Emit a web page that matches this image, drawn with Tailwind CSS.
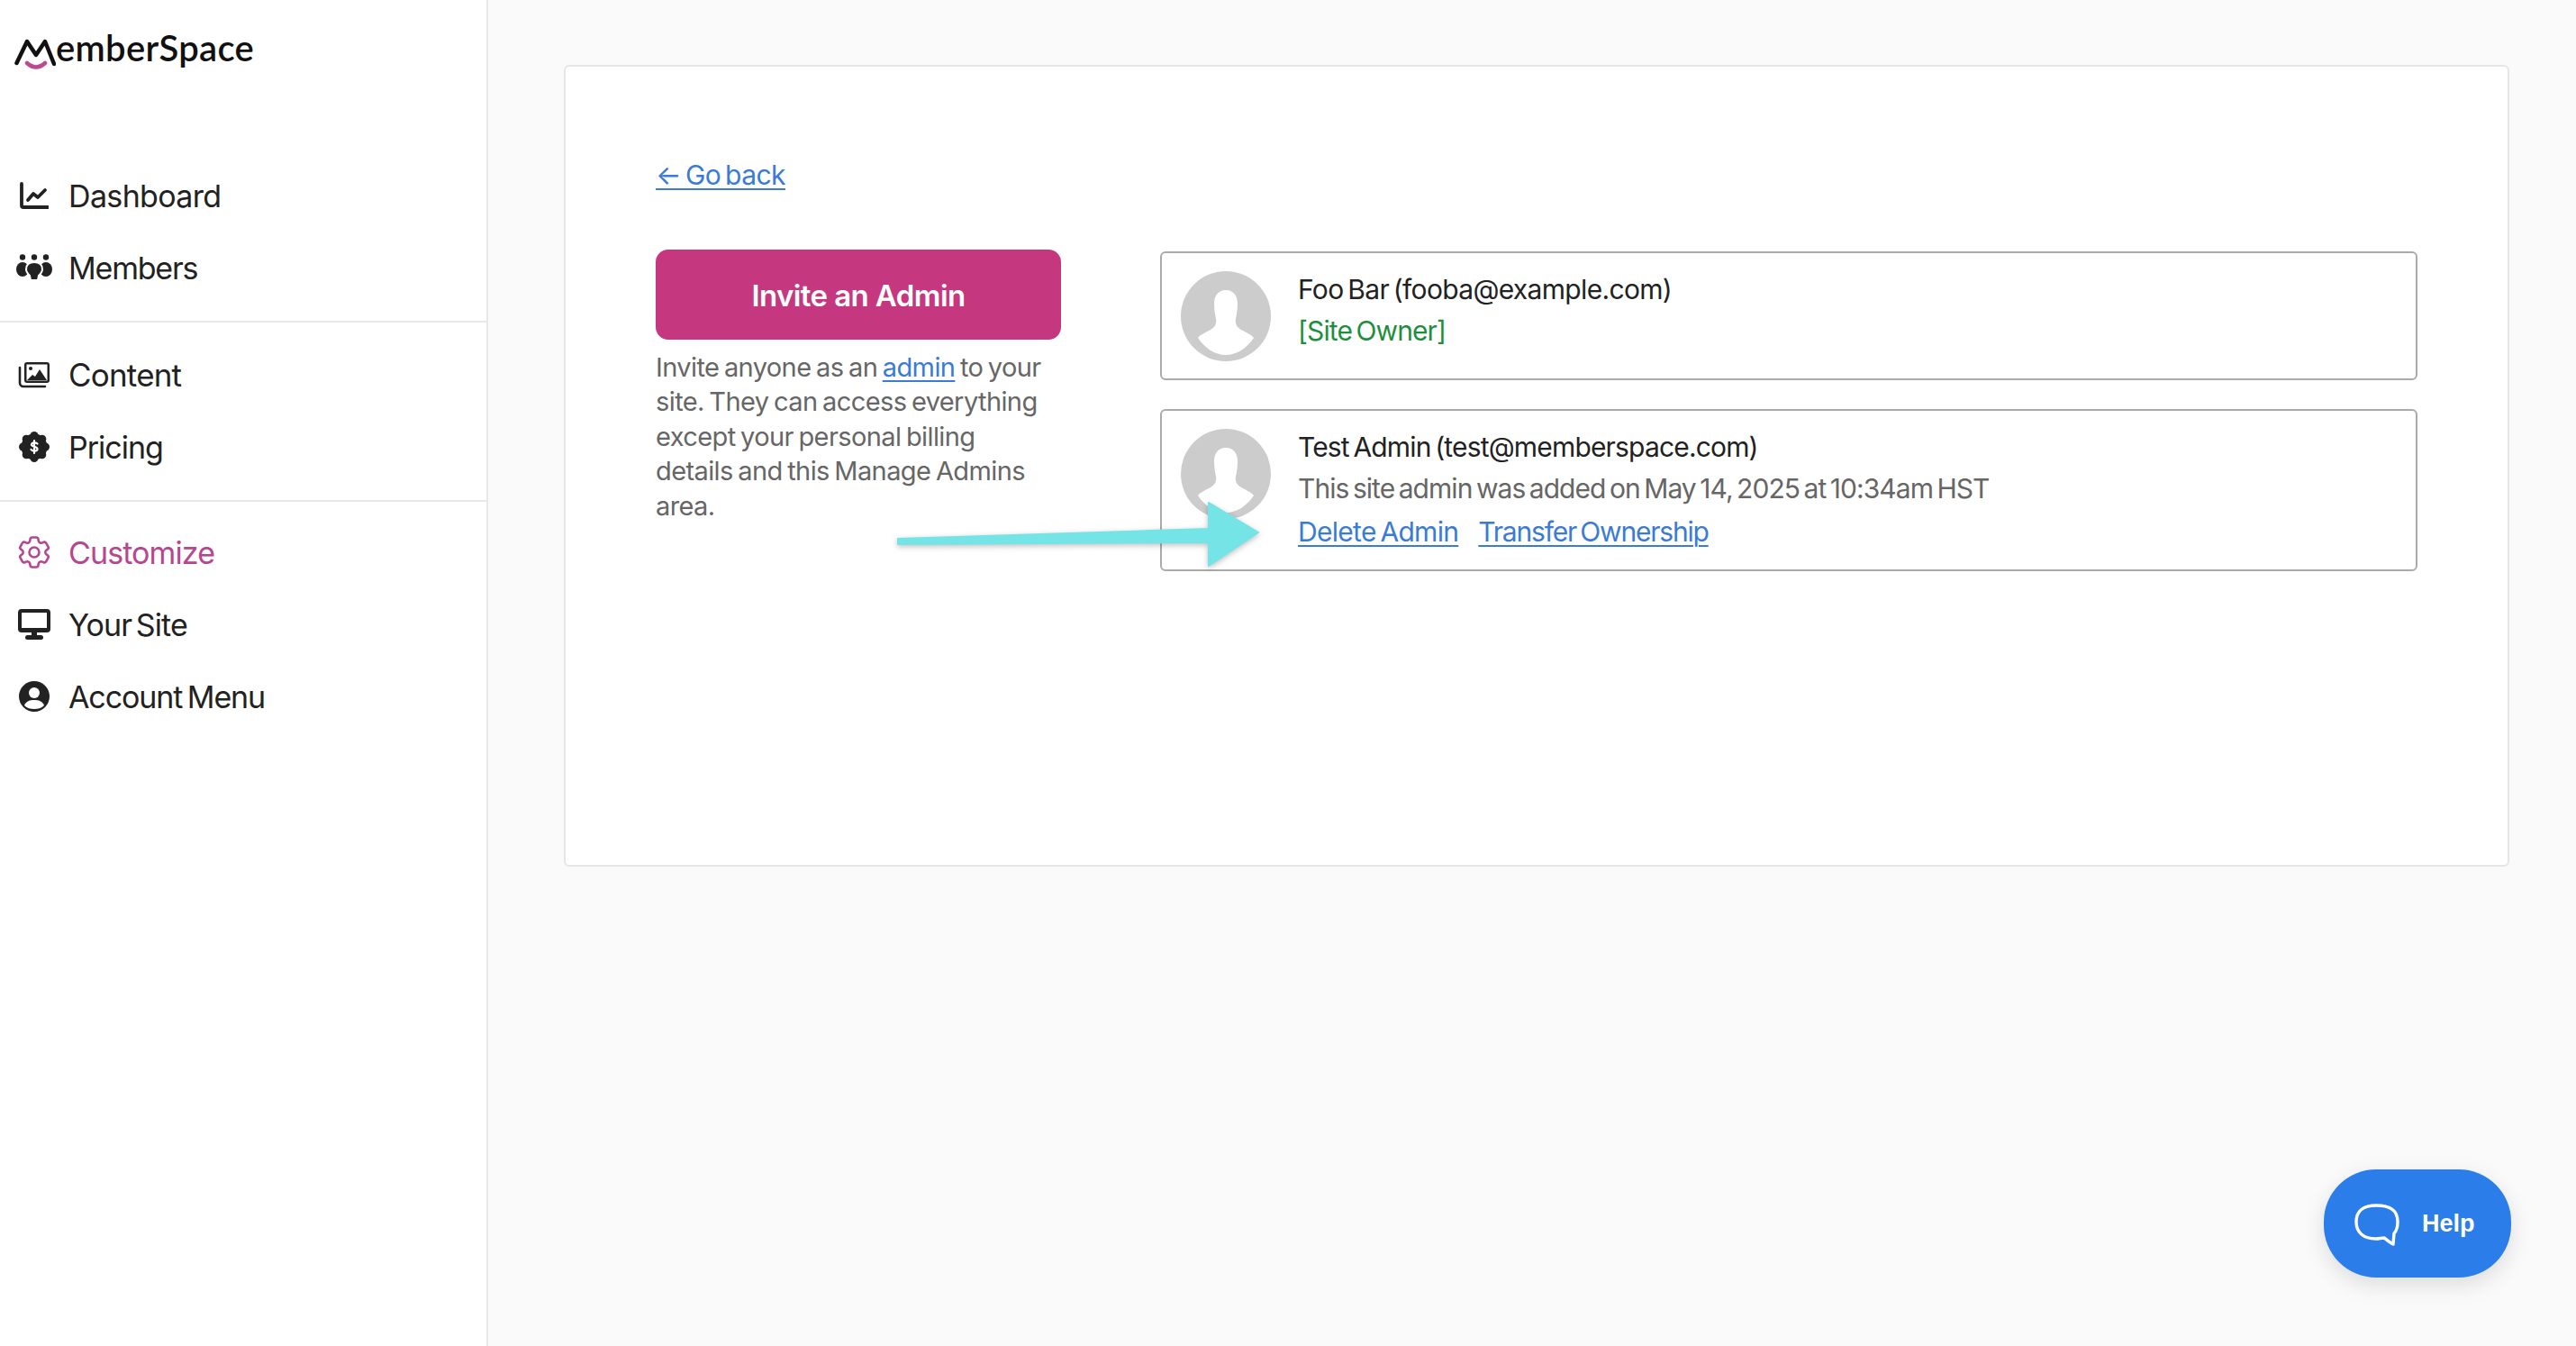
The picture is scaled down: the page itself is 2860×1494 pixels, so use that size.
<!DOCTYPE html>
<html lang="en">
<head>
    <meta charset="UTF-8">
    <title>Manage Admins</title>
    <script src="https://cdn.jsdelivr.net/npm/@tailwindcss/browser@4"></script>
</head>
<body class="bg-[#fafafa] font-['Inter',sans-serif] text-[#222]">
    <div class="relative flex h-[1494px] w-[2860px] overflow-hidden">
        <!-- Sidebar -->
        <aside class="h-full w-[542px] shrink-0 border-r-2 border-[#e8e8e8] bg-white">
            <div class="flex h-[177px] items-start pl-[16px] pt-[26px]">
                <svg class="mt-[17px] h-[36px] w-[46px] shrink-0" viewBox="0 0 46 36" fill="none">
                    <path d="M2.500 27 L14 3 L24 18 L34 3 L44 28" stroke="#111" stroke-width="4.500" stroke-linecap="round" stroke-linejoin="round"/>
                    <path d="M14 27 Q24 36 34 27" stroke="#bb4a93" stroke-width="4.500" stroke-linecap="round"/>
                </svg>
                <span class="text-[40px] leading-[54px] font-semibold tracking-[0.3px] text-[#111] font-['Lato',sans-serif]">emberSpace</span>
            </div>

            <nav>
                <a class="flex h-[80px] items-center" href="#">
                    <span class="flex w-[76px] justify-center">
                        <svg class="h-[30px] w-[32px]" viewBox="0 0 32 30" fill="none" stroke="#222" stroke-width="3.800" stroke-linecap="round" stroke-linejoin="round"><path d="M2 2V26a2 2 0 0 0 2 2H31"/><path d="M9 20l6-7 5 4 8-8"/></svg>
                    </span>
                    <span class="text-[34px] tracking-[-0.65px]">Dashboard</span>
                </a>
                <a class="flex h-[80px] items-center" href="#">
                    <span class="flex w-[76px] justify-center">
                        <svg class="h-[30px] w-[40px]" viewBox="0 0 40 30" fill="#222"><circle cx="7" cy="3.500" r="3.200"/><circle cx="20" cy="3.500" r="3.200"/><circle cx="33" cy="3.500" r="3.200"/><ellipse cx="7" cy="17" rx="7" ry="8"/><ellipse cx="33" cy="17" rx="7" ry="8"/><path d="M20 9c6 0 9 3 9 8 0 3-2 5-4 7l-1 5h-8l-1-5c-2-2-4-4-4-7 0-5 3-8 9-8z" stroke="#fff" stroke-width="2"/></svg>
                    </span>
                    <span class="text-[34px] tracking-[-1.2px]">Members</span>
                </a>
            </nav>
            <div class="mt-[19px] border-t-2 border-[#e8e8e8] pt-[18px]">
                <a class="flex h-[80px] items-center" href="#">
                    <span class="flex w-[76px] justify-center">
                        <svg class="h-[30px] w-[36px]" viewBox="0 0 36 30" fill="none"><path d="M2 7V24a4 4 0 0 0 4 4H30" stroke="#222" stroke-width="2.600" stroke-linecap="round"/><rect x="7" y="1" width="28" height="23" rx="3" fill="#222"/><rect x="9.500" y="3.500" width="23" height="18" fill="#fff"/><circle cx="14" cy="8" r="2" fill="#222"/><path d="M10 21l6-6 3 2 5-8 8 12z" fill="#222"/></svg>
                    </span>
                    <span class="text-[35px] tracking-[-0.8px]">Content</span>
                </a>
                <a class="flex h-[80px] items-center" href="#">
                    <span class="flex w-[76px] justify-center">
                        <svg class="h-[34px] w-[34px]" viewBox="0 0 34 34"><g fill="#222"><circle cx="17" cy="17" r="14.500"/><circle cx="17" cy="4.500" r="4.500"/><circle cx="17" cy="29.500" r="4.500"/><circle cx="4.500" cy="17" r="4.500"/><circle cx="29.500" cy="17" r="4.500"/><circle cx="8.200" cy="8.200" r="4.500"/><circle cx="25.800" cy="8.200" r="4.500"/><circle cx="8.200" cy="25.800" r="4.500"/><circle cx="25.800" cy="25.800" r="4.500"/></g><path fill="none" stroke="#fff" stroke-width="2.200" stroke-linecap="round" d="M20.500 13.500c-.8-1.500-6-2-6.500 .8-.5 3 7 2.200 6.500 5.400-.5 2.600-5.800 2.300-7 .3M17 10v14"/></svg>
                    </span>
                    <span class="text-[34px] tracking-[-1px]">Pricing</span>
                </a>
            </div>
            <div class="mt-[19px] border-t-2 border-[#e8e8e8] pt-[16px]">
                <a class="flex h-[80px] items-center text-[#b8468f]" href="#">
                    <span class="flex w-[76px] justify-center">
                        <svg class="h-[44px] w-[44px]" viewBox="0 0 24 24" fill="none" stroke="#b8468f" stroke-width="1.400" stroke-linejoin="round"><path d="M9.594 3.940c.09-.542.56-.94 1.110-.94h2.593c.55 0 1.020.398 1.110.94l.213 1.281c.063.374.313.686.645.87.074.04.147.083.22.127.325.196.72.257 1.075.124l1.217-.456a1.125 1.125 0 0 1 1.370.49l1.296 2.247a1.125 1.125 0 0 1-.26 1.431l-1.003.827c-.293.241-.438.613-.43.992a7.723 7.723 0 0 1 0 .255c-.008.378.137.75.43.991l1.004.827c.424.35.534.955.26 1.430l-1.298 2.247a1.125 1.125 0 0 1-1.369.491l-1.217-.456c-.355-.133-.75-.072-1.076.124a6.470 6.470 0 0 1-.22.128c-.331.183-.581.495-.644.869l-.213 1.281c-.09.543-.56.94-1.110.94h-2.594c-.55 0-1.019-.398-1.110-.94l-.213-1.281c-.062-.374-.312-.686-.644-.87a6.520 6.520 0 0 1-.22-.127c-.325-.196-.72-.257-1.076-.124l-1.217.456a1.125 1.125 0 0 1-1.369-.49l-1.297-2.247a1.125 1.125 0 0 1 .26-1.431l1.004-.827c.292-.24.437-.613.43-.991a6.932 6.932 0 0 1 0-.255c.007-.38-.138-.751-.43-.992l-1.004-.827a1.125 1.125 0 0 1-.26-1.430l1.297-2.247a1.125 1.125 0 0 1 1.370-.491l1.216.456c.356.133.751.072 1.076-.124.072-.044.146-.086.22-.128.332-.183.582-.495.644-.869l.214-1.280Z"/><circle cx="12" cy="12" r="3"/></svg>
                    </span>
                    <span class="text-[34px] tracking-[-0.9px]">Customize</span>
                </a>
                <a class="flex h-[80px] items-center" href="#">
                    <span class="flex w-[76px] justify-center">
                        <svg class="h-[34px] w-[36px]" viewBox="0 0 36 34" fill="#222"><path fill-rule="evenodd" d="M4 0H32a4 4 0 0 1 4 4V22a4 4 0 0 1-4 4H4a4 4 0 0 1-4-4V4a4 4 0 0 1 4-4zM4 4V21H32V4z"/><rect x="15" y="25" width="6" height="6"/><rect x="8" y="29" width="20" height="5" rx="2.500"/></svg>
                    </span>
                    <span class="text-[34px] tracking-[-0.9px] [word-spacing:-4px]">Your Site</span>
                </a>
                <a class="flex h-[80px] items-center" href="#">
                    <span class="flex w-[76px] justify-center">
                        <svg class="h-[34px] w-[34px]" viewBox="0 0 34 34"><circle cx="17" cy="17" r="17" fill="#222"/><circle cx="17" cy="13" r="6" fill="#fff"/><path d="M6 27c2-5 6-6 11-6s9 1 11 6c-3 3-7 4-11 4s-8-1-11-4z" fill="#fff"/></svg>
                    </span>
                    <span class="text-[34px] tracking-[-1.1px] [word-spacing:-3px]">Account Menu</span>
                </a>
            </div>
        </aside>

        <!-- Main Content -->
        <main class="flex-1 pl-[84px] pt-[72px]">
            <div class="h-[890px] w-[2160px] rounded-[6px] border-2 border-[#e6e6e6] bg-white pl-[100px] pr-[100px] pt-[96px]">
                <a href="#" class="block w-fit h-[48px] text-[30px] leading-[48px] tracking-[-0.55px] [word-spacing:-3px] text-[#3a7bd5] underline underline-offset-[4px] decoration-2">← Go back</a>

                <div class="mt-[61px] flex gap-[110px]">
                    <div class="w-[450px] shrink-0">
                        <button class="-mt-[2px] block h-[100px] w-full rounded-[14px] bg-[#c5387f] pt-[4px] text-[33px] font-semibold tracking-[-0.6px] text-white">Invite an Admin</button>
                        <p class="mt-[12px] w-[434px] text-[29px] leading-[38.400px] tracking-[-0.6px] [word-spacing:-2px] text-[#666]">Invite anyone as an <a href="#" class="text-[#3a7bd5] underline underline-offset-[4px] decoration-2">admin</a> to your site. They can access everything except your personal billing details and this Manage Admins area.</p>
                    </div>

                    <div class="flex-1">
                        <div class="flex h-[143px] items-start rounded-[6px] border-2 border-[#aaa] pl-[21px] pt-[20px]">
                            <svg class="h-[100px] w-[100px] shrink-0" viewBox="0 0 100 100"><circle cx="50" cy="50" r="50" fill="#ccc"/><path d="M50 21c-9 0-13 7-13 15 0 7 1 12 2 17 1 5-1 9-6 12-5 3-11 5-14 9 7 11 19 19 31 19s24-8 31-19c-3-4-9-6-14-9-5-3-7-7-6-12 1-5 2-10 2-17 0-8-4-15-13-15z" fill="#fff"/></svg>
                            <div class="ml-[30px]">
                                <p class="-mt-[3px] text-[30px] leading-[46px] tracking-[-0.67px] [word-spacing:-3px] text-[#222]">Foo Bar (fooba@example.com)</p>
                                <p class="text-[30px] leading-[46px] tracking-[-0.9px] [word-spacing:-3px] text-[#1e8e3e]">[Site Owner]</p>
                            </div>
                        </div>
                        <div class="mt-[32px] flex h-[180px] items-start rounded-[6px] border-2 border-[#aaa] pl-[21px] pt-[20px]">
                            <svg class="h-[100px] w-[100px] shrink-0" viewBox="0 0 100 100"><circle cx="50" cy="50" r="50" fill="#ccc"/><path d="M50 21c-9 0-13 7-13 15 0 7 1 12 2 17 1 5-1 9-6 12-5 3-11 5-14 9 7 11 19 19 31 19s24-8 31-19c-3-4-9-6-14-9-5-3-7-7-6-12 1-5 2-10 2-17 0-8-4-15-13-15z" fill="#fff"/></svg>
                            <div class="ml-[30px]">
                                <p class="-mt-[3px] text-[30px] leading-[46px] tracking-[-0.83px] [word-spacing:-3px] text-[#222]">Test Admin (test@memberspace.com)</p>
                                <p class="text-[30px] leading-[46px] tracking-[-0.95px] [word-spacing:-3px] text-[#666]">This site admin was added on May 14, 2025 at 10:34am HST</p>
                                <p class="mt-[2px] flex gap-[22px] text-[30px] leading-[46px] text-[#3a7bd5]">
                                    <a href="#" class="tracking-[-0.7px] [word-spacing:-3px] underline underline-offset-[4px] decoration-2">Delete Admin</a>
                                    <a href="#" class="tracking-[-1.2px] [word-spacing:-3px] underline underline-offset-[4px] decoration-2">Transfer Ownership</a>
                                </p>
                            </div>
                        </div>
                    </div>
                </div>
            </div>
        </main>

        <!-- Annotation arrow -->
        <svg class="absolute left-[990px] top-[550px] h-[90px] w-[420px] drop-shadow-[0_2px_3px_rgba(0,0,0,0.25)]" viewBox="0 0 420 90">
            <path d="M7 48 L352 37 L352 8 L407 41 L352 78 L352 52 L7 54 Z" fill="#75e4e6" stroke="#75e4e6" stroke-width="2" stroke-linejoin="round"/>
        </svg>

        <!-- Help button -->
        <button class="absolute left-[2580px] top-[1298px] flex h-[120px] w-[208px] items-center rounded-[58px] bg-[#2b7de9] pl-[34px] shadow-[0_8px_24px_rgba(0,0,0,0.12)]">
            <svg class="mt-[3px] h-[48px] w-[50px] shrink-0" viewBox="0 0 50 48" fill="none"><path d="M24 2C38 2 48 6 48 20c0 6-1 10-4 13l-1 12c-3-1-7-5-10-7-3 0-6 1-9 1C10 39 2 32 2 20 2 8 10 2 24 2z" stroke="#fff" stroke-width="3.400" stroke-linejoin="round"/></svg>
            <span class="ml-[25px] text-[27px] font-bold text-white font-['Liberation_Sans',sans-serif]">Help</span>
        </button>
    </div>
</body>
</html>
